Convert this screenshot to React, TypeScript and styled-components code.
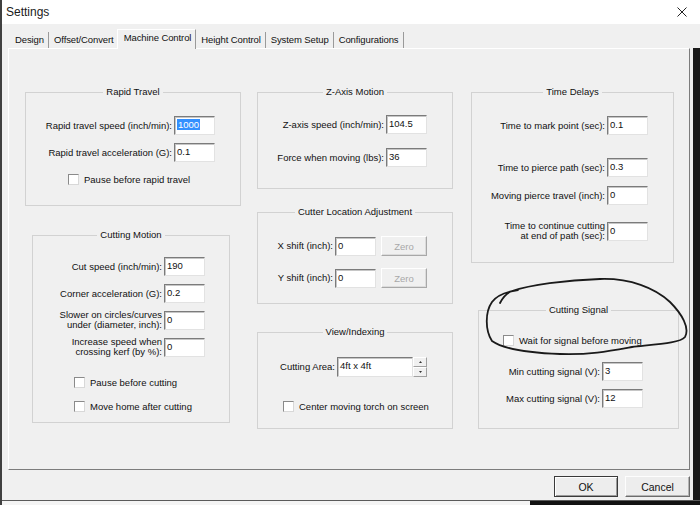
import React from 'react';
import styled, { createGlobalStyle } from 'styled-components';

const GlobalStyle = createGlobalStyle`
  html, body {
    margin: 0;
    padding: 0;
    background: #f0f0f0;
  }
`;

const Frame = styled.div`
  position: relative;
  width: 700px;
  height: 505px;
  box-sizing: border-box;
  border-left: 2px solid #404040;
  background: #f0f0f0;
  display: flex;
  flex-direction: column;
  overflow: hidden;
  font-family: 'Liberation Sans', Arial, sans-serif;
  font-size: 9.5px;
  color: #111;
`;

const TitleBar = styled.div`
  flex: none;
  height: 24px;
  background: #fff;
  display: flex;
  align-items: center;
  justify-content: space-between;
  padding: 0 13px 0 4px;
  font-size: 12px;
  color: #1a1a1a;
`;

const Body = styled.div`
  flex: 1;
  display: flex;
  min-height: 0;
`;

const Main = styled.div`
  flex: 1;
  display: flex;
  flex-direction: column;
  padding: 0 3px 0 6px;
`;

const RightShade = styled.div`
  flex: none;
  width: 7px;
  background: linear-gradient(#f0f0f0 0 24px, #1b1b1b 24px);
`;

const BottomEdge = styled.div`
  flex: none;
  height: 5px;
  box-sizing: border-box;
  border-top: 1px solid #5a5a5a;
  background: linear-gradient(to right, #f4f4f4 0 528px, #121212 528px);
`;

const TabStrip = styled.div`
  flex: none;
  height: 19px;
  margin-top: 5px;
  padding-left: 2px;
  display: flex;
  align-items: flex-end;
`;

const Tab = styled.div<{ $active?: boolean }>`
  box-sizing: border-box;
  height: ${({ $active }) => ($active ? '20px' : '16px')};
  line-height: ${({ $active }) => ($active ? '16px' : '15px')};
  padding: ${({ $active }) => ($active ? '0 4px 0 6px' : '0 4px 0 5px')};
  margin-left: ${({ $active }) => ($active ? '-2px' : '0')};
  margin-bottom: ${({ $active }) => ($active ? '-1px' : '0')};
  border-right: 1px solid #9a9a9a;
  border-left: ${({ $active }) => ($active ? '1px solid #fff' : 'none')};
  border-top: ${({ $active }) => ($active ? '1px solid #fff' : 'none')};
  background: #f0f0f0;
  position: relative;
  z-index: ${({ $active }) => ($active ? 1 : 0)};
  letter-spacing: -0.1px;
  white-space: nowrap;
`;

const Panel = styled.div`
  flex: none;
  box-sizing: border-box;
  height: 422px;
  border: 1px solid;
  border-color: #fff #7c7c7c #7c7c7c #fff;
  padding: 43px 0 0 16px;
  display: flex;
  align-items: flex-start;
`;

const Column = styled.div<{ $w: number; $ml?: number }>`
  width: ${({ $w }) => $w}px;
  margin-left: ${({ $ml }) => $ml ?? 0}px;
  display: flex;
  flex-direction: column;
`;

const Group = styled.div<{ $w: number; $h: number; $ml?: number; $mt?: number }>`
  box-sizing: border-box;
  width: ${({ $w }) => $w}px;
  height: ${({ $h }) => $h}px;
  margin-left: ${({ $ml }) => $ml ?? 0}px;
  margin-top: ${({ $mt }) => $mt ?? 0}px;
  border: 1px solid #d2d2d2;
`;

const GroupTitle = styled.div`
  width: fit-content;
  height: 12px;
  margin: -7px auto 0;
  padding: 0 3px;
  line-height: 12px;
  background: #f0f0f0;
`;

const Fields = styled.div<{ $pr: number }>`
  padding-right: ${({ $pr }) => $pr}px;
`;

const Row = styled.div<{ $mt: number }>`
  display: flex;
  align-items: center;
  justify-content: flex-end;
  gap: 2px;
  margin-top: ${({ $mt }) => $mt}px;
`;

const Label = styled.span`
  text-align: right;
  white-space: pre;
  line-height: 10px;
`;

const TextBox = styled.div<{ $w?: number; $h?: number }>`
  box-sizing: border-box;
  flex: none;
  width: ${({ $w }) => $w ?? 41}px;
  height: ${({ $h }) => $h ?? 19}px;
  padding: 2px 0 0 2px;
  line-height: 12px;
  background: #fff;
  border: 1px solid;
  border-color: #7b7b7b #e2e2e2 #e2e2e2 #7b7b7b;
  box-shadow: inset 1px 1px 0 #c6c6c6;
  white-space: nowrap;
`;

const Selected = styled.span`
  background: #3390ff;
  color: #fff;
  padding: 0 1px;
`;

const CheckRow = styled.div<{ $mt: number; $pl: number }>`
  display: flex;
  align-items: center;
  gap: 5px;
  height: 13px;
  margin-top: ${({ $mt }) => $mt}px;
  padding-left: ${({ $pl }) => $pl}px;
  white-space: nowrap;
`;

const CheckBox = styled.span`
  box-sizing: border-box;
  flex: none;
  width: 11px;
  height: 11px;
  background: #fff;
  border: 1px solid;
  border-color: #8a8a8a #d8d8d8 #d8d8d8 #8a8a8a;
`;

const ZeroButton = styled.div`
  box-sizing: border-box;
  flex: none;
  width: 46px;
  height: 20px;
  margin-left: 3px;
  border: 1px solid;
  border-color: #fff #a8a8a8 #a8a8a8 #fff;
  box-shadow: inset -1px -1px 0 #dcdcdc;
  color: #a8a8a8;
  display: flex;
  align-items: center;
  justify-content: center;
`;

const Combo = styled.div`
  display: flex;
  flex: none;
`;

const Spin = styled.div`
  display: flex;
  flex-direction: column;
  width: 14px;
  height: 20px;
`;

const SpinButton = styled.div`
  box-sizing: border-box;
  flex: 1;
  border: 1px solid;
  border-color: #fff #a0a0a0 #a0a0a0 #fff;
  background: #f0f0f0;
  display: flex;
  align-items: center;
  justify-content: center;
`;

const ButtonBar = styled.div`
  display: flex;
  justify-content: flex-end;
  gap: 7px;
  margin-top: 6px;
`;

const DialogButton = styled.div<{ $default?: boolean; $w: number }>`
  box-sizing: border-box;
  width: ${({ $w }) => $w}px;
  height: 21px;
  display: flex;
  align-items: center;
  justify-content: center;
  font-size: 10.5px;
  background: #ededed;
  border: 1px solid;
  border-color: ${({ $default }) =>
    $default ? '#3a3a3a' : '#fdfdfd #6c6c6c #6c6c6c #fdfdfd'};
  box-shadow: ${({ $default }) =>
    $default ? 'inset 1px 1px 0 #fff, inset -1px -1px 0 #9a9a9a' : 'inset -1px -1px 0 #b4b4b4'};
`;

const Annotation = styled.svg`
  position: absolute;
  top: 0;
  left: -2px;
  width: 700px;
  height: 505px;
  pointer-events: none;
`;

const Arrow = ({ up }: { up?: boolean }) => (
  <svg width="3" height="2" viewBox="0 0 3 2">
    <path d={up ? 'M1.5 0 L3 2 L0 2 Z' : 'M0 0 L3 0 L1.5 2 Z'} fill="#333" />
  </svg>
);

export default function App() {
  return (
    <>
      <GlobalStyle />
      <Frame>
        <TitleBar>
          <span>Settings</span>
          <svg width="10" height="10" viewBox="0 0 10 10">
            <path d="M0.5 0.5 L9.5 9.5 M9.5 0.5 L0.5 9.5" stroke="#222" strokeWidth="1" />
          </svg>
        </TitleBar>
        <Body>
          <Main>
            <TabStrip>
              <Tab>Design</Tab>
              <Tab>Offset/Convert</Tab>
              <Tab $active>Machine Control</Tab>
              <Tab>Height Control</Tab>
              <Tab>System Setup</Tab>
              <Tab>Configurations</Tab>
            </TabStrip>
            <Panel>
              <Column $w={216}>
                <Group $w={216} $h={114}>
                  <GroupTitle>Rapid Travel</GroupTitle>
                  <Fields $pr={25}>
                    <Row $mt={18}>
                      <Label>Rapid travel speed (inch/min):</Label>
                      <TextBox>
                        <Selected>1000</Selected>
                      </TextBox>
                    </Row>
                    <Row $mt={8}>
                      <Label>Rapid travel acceleration (G):</Label>
                      <TextBox>0.1</TextBox>
                    </Row>
                  </Fields>
                  <CheckRow $mt={11} $pl={42}>
                    <CheckBox />
                    Pause before rapid travel
                  </CheckRow>
                </Group>
                <Group $w={198} $h={188} $ml={7} $mt={29}>
                  <GroupTitle>Cutting Motion</GroupTitle>
                  <Fields $pr={24}>
                    <Row $mt={16}>
                      <Label>Cut speed (inch/min):</Label>
                      <TextBox>190</TextBox>
                    </Row>
                    <Row $mt={8}>
                      <Label>Corner acceleration (G):</Label>
                      <TextBox>0.2</TextBox>
                    </Row>
                    <Row $mt={7}>
                      <Label>{'Slower on circles/curves\nunder (diameter, inch):'}</Label>
                      <TextBox>0</TextBox>
                    </Row>
                    <Row $mt={7}>
                      <Label>{'Increase speed when\ncrossing kerf (by %):'}</Label>
                      <TextBox>0</TextBox>
                    </Row>
                  </Fields>
                  <CheckRow $mt={19} $pl={41}>
                    <CheckBox />
                    Pause before cutting
                  </CheckRow>
                  <CheckRow $mt={11} $pl={41}>
                    <CheckBox />
                    Move home after cutting
                  </CheckRow>
                </Group>
              </Column>

              <Column $w={196} $ml={16}>
                <Group $w={196} $h={97}>
                  <GroupTitle>Z-Axis Motion</GroupTitle>
                  <Fields $pr={25}>
                    <Row $mt={17}>
                      <Label>Z-axis speed (inch/min):</Label>
                      <TextBox>104.5</TextBox>
                    </Row>
                    <Row $mt={14}>
                      <Label>Force when moving (lbs):</Label>
                      <TextBox>36</TextBox>
                    </Row>
                  </Fields>
                </Group>
                <Group $w={196} $h={92} $mt={23}>
                  <GroupTitle>Cutter Location Adjustment</GroupTitle>
                  <Fields $pr={25}>
                    <Row $mt={18}>
                      <Label>X shift (inch):</Label>
                      <TextBox>0</TextBox>
                      <ZeroButton>Zero</ZeroButton>
                    </Row>
                    <Row $mt={12}>
                      <Label>Y shift (inch):</Label>
                      <TextBox>0</TextBox>
                      <ZeroButton>Zero</ZeroButton>
                    </Row>
                  </Fields>
                </Group>
                <Group $w={196} $h={97} $mt={28}>
                  <GroupTitle>View/Indexing</GroupTitle>
                  <Fields $pr={25}>
                    <Row $mt={19}>
                      <Label>Cutting Area:</Label>
                      <Combo>
                        <TextBox $w={76} $h={20}>4ft x 4ft</TextBox>
                        <Spin>
                          <SpinButton>
                            <Arrow up />
                          </SpinButton>
                          <SpinButton>
                            <Arrow />
                          </SpinButton>
                        </Spin>
                      </Combo>
                    </Row>
                  </Fields>
                  <CheckRow $mt={23} $pl={25}>
                    <CheckBox />
                    Center moving torch on screen
                  </CheckRow>
                </Group>
              </Column>

              <Column $w={208} $ml={18}>
                <Group $w={203} $h={171}>
                  <GroupTitle>Time Delays</GroupTitle>
                  <Fields $pr={25}>
                    <Row $mt={18}>
                      <Label>Time to mark point (sec):</Label>
                      <TextBox>0.1</TextBox>
                    </Row>
                    <Row $mt={23}>
                      <Label>Time to pierce path (sec):</Label>
                      <TextBox>0.3</TextBox>
                    </Row>
                    <Row $mt={9}>
                      <Label>Moving pierce travel (inch):</Label>
                      <TextBox>0</TextBox>
                    </Row>
                    <Row $mt={16}>
                      <Label>{'Time to continue cutting\nat end of path (sec):'}</Label>
                      <TextBox>0</TextBox>
                    </Row>
                  </Fields>
                </Group>
                <Group $w={201} $h={119} $ml={7} $mt={47}>
                  <GroupTitle>Cutting Signal</GroupTitle>
                  <CheckRow $mt={18} $pl={24}>
                    <CheckBox />
                    Wait for signal before moving
                  </CheckRow>
                  <Fields $pr={35}>
                    <Row $mt={15}>
                      <Label>Min cutting signal (V):</Label>
                      <TextBox>3</TextBox>
                    </Row>
                    <Row $mt={8}>
                      <Label>Max cutting signal (V):</Label>
                      <TextBox>12</TextBox>
                    </Row>
                  </Fields>
                </Group>
              </Column>
            </Panel>
            <ButtonBar>
              <DialogButton $default $w={64}>OK</DialogButton>
              <DialogButton $w={65}>Cancel</DialogButton>
            </ButtonBar>
          </Main>
          <RightShade />
        </Body>
        <BottomEdge />
        <Annotation viewBox="0 0 700 505">
          <path
            d="M500 303 C503 297 507 293 512 291 C530 285 565 280 600 279 C630 278 655 288 670 302 C682 314 690 328 685 337 C680 343 660 344 632 347 C610 351 590 355 560 354 C530 353 505 350 492 341 C485 330 485 312 492 302 C497 295 505 292 518 290"
            fill="none"
            stroke="#1a1a1a"
            strokeWidth="1.8"
            strokeLinecap="round"
            strokeLinejoin="round"
          />
        </Annotation>
      </Frame>
    </>
  );
}
